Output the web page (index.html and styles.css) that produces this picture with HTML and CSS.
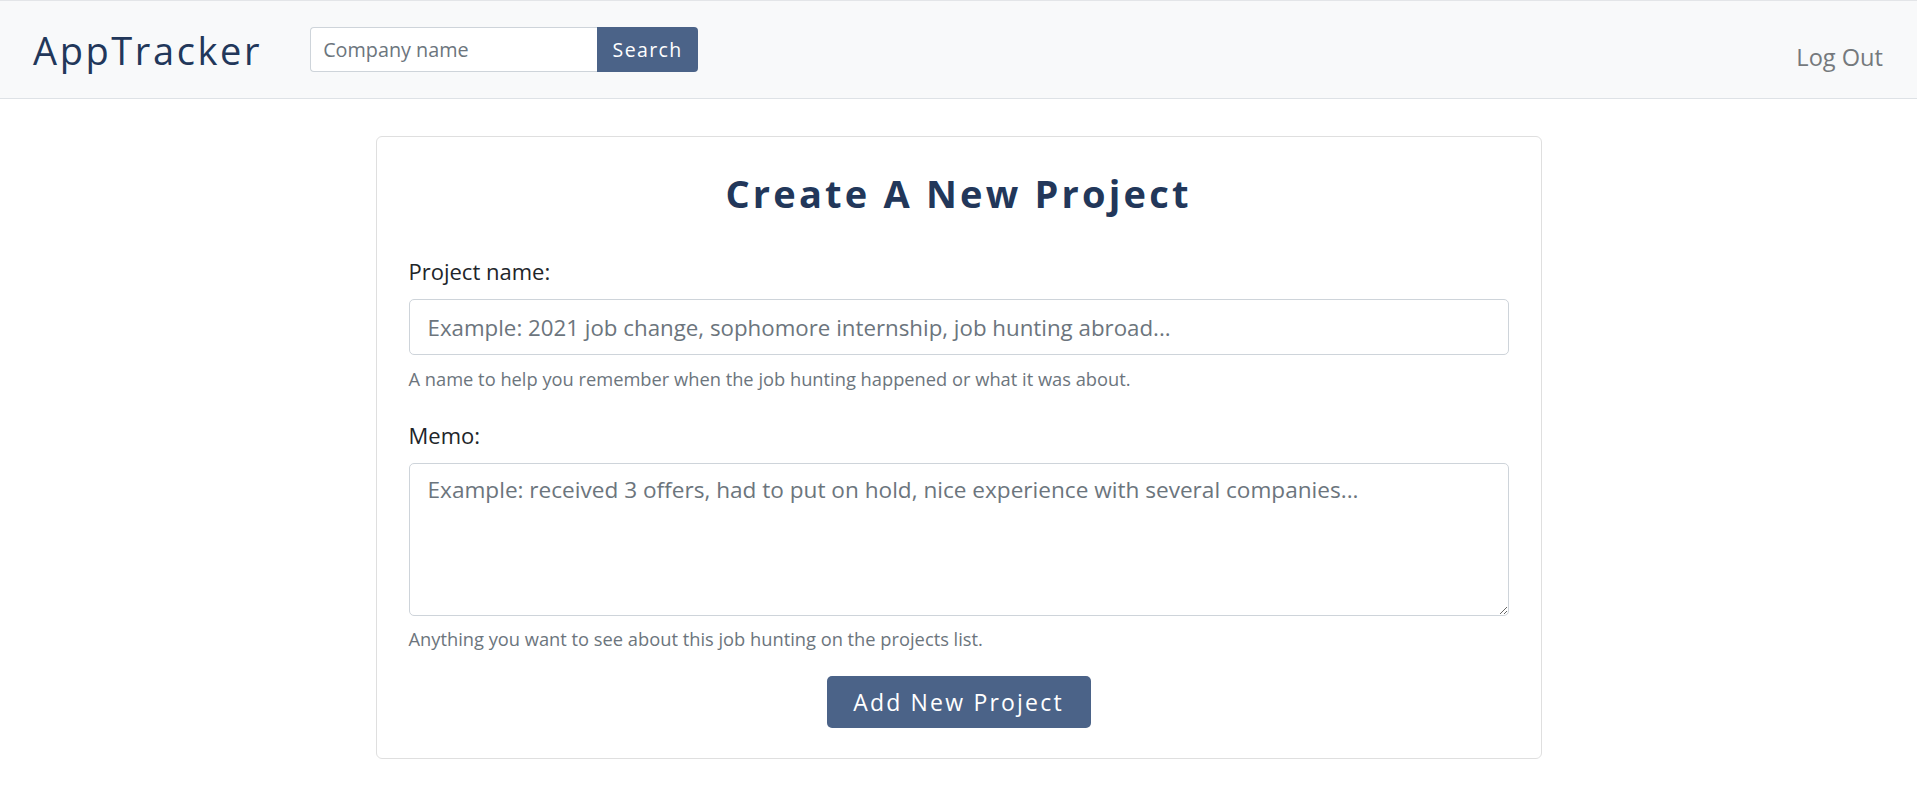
FILE: index.html
```html
<!DOCTYPE html>
<html lang="en">
<head>
<meta charset="utf-8">
<title>AppTracker</title>
<link rel="stylesheet" href="styles.css">
</head>
<body>
<nav class="navbar">
  <a class="brand" href="#">AppTracker</a>
  <form class="search">
    <input class="search-input" type="text" placeholder="Company name">
    <button class="search-btn" type="button">Search</button>
  </form>
  <a class="logout" href="#">Log Out</a>
</nav>
<main class="main">
  <section class="card">
    <h1 class="title">Create A New Project</h1>
    <label class="label" for="pname">Project name:</label>
    <input class="field" id="pname" type="text" placeholder="Example: 2021 job change, sophomore internship, job hunting abroad...">
    <p class="help">A name to help you remember when the job hunting happened or what it was about.</p>
    <label class="label label-memo" for="memo">Memo:</label>
    <textarea class="field area" id="memo" placeholder="Example: received 3 offers, had to put on hold, nice experience with several companies..."></textarea>
    <p class="help help-memo">Anything you want to see about this job hunting on the projects list.</p>
    <div class="actions">
      <button class="submit" type="button">Add New Project</button>
    </div>
  </section>
</main>
</body>
</html>
```
FILE: styles.css
```css
* { box-sizing: border-box; }
html, body { margin: 0; padding: 0; }
body {
  font-family: "Open Sans", "Noto Sans", sans-serif;
  color: #212529;
  background: #fff;
}
.navbar {
  height: 99px;
  background: #f8f9fa;
  border-top: 1px solid #e3e5e8;
  border-bottom: 1px solid #dee2e6;
  display: flex;
  align-items: center;
  padding: 0 34px 0 33px;
}
.brand {
  font-size: 38px;
  letter-spacing: 2.6px;
  color: #22375a;
  text-decoration: none;
  line-height: 1;
  margin-top: 1px;
  margin-right: 48px;
}
.search {
  display: flex;
  margin-top: 0;
}
.search-input {
  width: 287px;
  height: 45px;
  border: 1px solid #ced4da;
  border-right: none;
  border-radius: 4px 0 0 4px;
  padding: 0 12px;
  font-family: inherit;
  font-size: 19.8px;
  color: #495057;
  background: #fff;
  outline: none;
}
.search-input::placeholder { color: #6c757d; }
.search-btn {
  width: 101px;
  height: 45px;
  border: none;
  border-radius: 0 4px 4px 0;
  background: #4b6388;
  color: #fff;
  font-family: inherit;
  font-size: 19.5px;
  letter-spacing: 1.4px;
  padding: 0;
}
.logout {
  margin-left: auto;
  margin-top: 15px;
  font-size: 23.6px;
  color: #75797d;
  text-decoration: none;
}
.main {
  display: flex;
  justify-content: center;
  padding-top: 37px;
}
.card {
  width: 1166px;
  border: 1px solid #dfdfdf;
  border-radius: 6px;
  padding: 32px 32px 30px;
  display: flex;
  flex-direction: column;
}
.title {
  margin: 0;
  text-align: center;
  font-size: 38px;
  line-height: 48px;
  font-weight: 700;
  letter-spacing: 3.2px;
  color: #22375a;
}
.label {
  display: block;
  margin-top: 39px;
  font-size: 22px;
  line-height: 30px;
  color: #212529;
}
.label-memo { margin-top: 28px; }
.field {
  display: block;
  width: 100%;
  height: 56px;
  margin-top: 13px;
  border: 1px solid #ced4da;
  border-radius: 5px;
  padding: 0 18px;
  font-family: inherit;
  font-size: 22.3px;
  color: #495057;
  background: #fff;
  outline: none;
}
.field::placeholder { color: #6c757d; }
.area {
  height: 153px;
  padding-top: 9px;
  font-size: 22.6px;
  resize: vertical;
  line-height: 1.5;
}
.help {
  margin: 11px 0 0;
  font-size: 18.3px;
  line-height: 26px;
  color: #6c757d;
}
.help-memo { margin-top: 10px; }
.actions {
  display: flex;
  justify-content: center;
  margin-top: 24px;
}
.submit {
  width: 264px;
  height: 52px;
  border: none;
  border-radius: 5px;
  background: #4b6388;
  color: #fff;
  font-family: inherit;
  font-size: 23px;
  letter-spacing: 2.2px;
  padding: 0;
}
```
